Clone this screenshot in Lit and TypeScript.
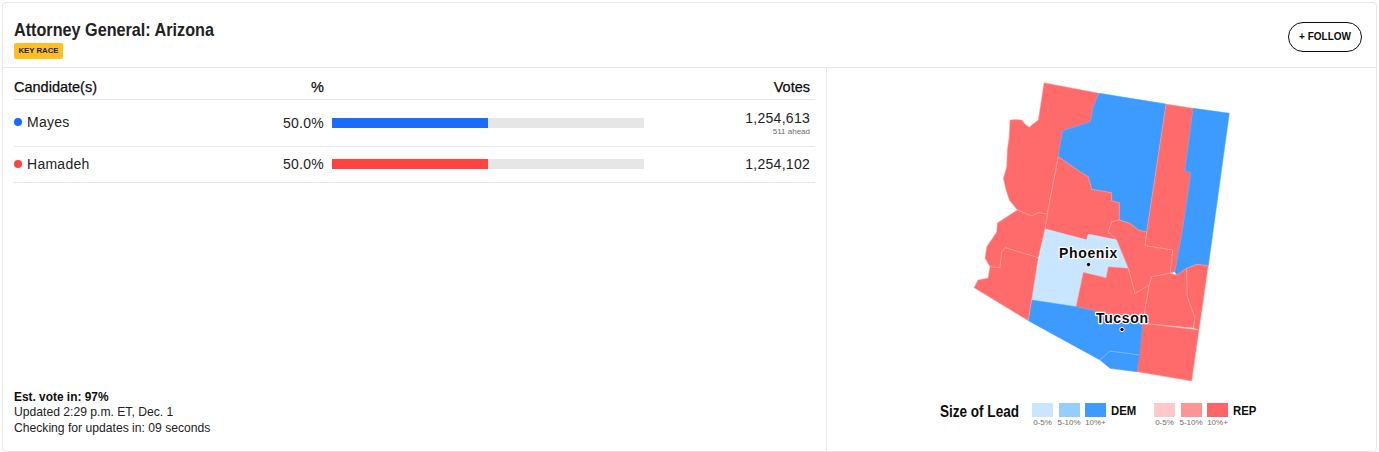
import { LitElement, html, css, svg } from "lit";
import { customElement } from "lit/decorators.js";

const R = "#ff6b6b", B = "#3d9bff", L = "#c8e6ff";
const counties: [string, string][] = [
  [R, "1044,82.7 1099.3,93.3 1093.3,106.7 1090.7,121.7 1062.7,130.7 1058.3,156.7 1047.3,214 1038.3,212.7 1031.7,216 1017.3,210 1009.3,200 1006,190 1003.3,178.3 1006.7,166.7 1007.3,150 1009,138 1010,120 1016,119.5 1021.7,120 1025,124 1029.3,127.3 1033,124 1038.3,120"],
  [B, "1099.3,93.3 1166,104 1146.7,232 1138.3,230 1130,223.3 1119.3,220 1119.3,202.7 1111.7,200.7 1111.7,192.7 1091.7,189.3 1088.3,176.7 1080,171.7 1058.3,156.7 1062.7,130.7 1090.7,121.7 1093.3,106.7"],
  [R, "1166,104 1193.3,108.3 1185,170.7 1191,172.7 1182.7,230 1175,271.7 1170,273.3 1172.7,250 1145,245.7 1146.7,232"],
  [B, "1193.3,108.3 1229.3,113.3 1208.3,265.7 1196.7,264.3 1186.7,268.3 1176.7,275 1175,271.7 1182.7,230 1191,172.7 1185,170.7"],
  [R, "1058.3,156.7 1080,171.7 1088.3,176.7 1091.7,189.3 1111.7,192.7 1111.7,200.7 1119.3,202.7 1119.3,220 1111.7,221.7 1108.3,231.7 1116.7,240 1088.3,234.3 1086.7,240 1045,229 1047.3,214"],
  [L, "1045,229 1086.7,240 1088.3,234.3 1116.7,240 1128.3,268.3 1108.3,266.7 1106,277.7 1083.3,272.3 1076,306.7 1031.7,300"],
  [R, "1083.3,272.3 1106,277.7 1108.3,266.7 1128.3,268.3 1135,293.3 1149.3,285 1142.7,323.3 1097,317 1095,311 1076,306.7"],
  [R, "1111.7,221.7 1119.3,220 1130,223.3 1138.3,230 1146.7,232 1145,245.7 1172.7,250 1170,273.3 1151.7,276.7 1149.3,285 1135,293.3 1128.3,268.3 1116.7,240 1108.3,231.7"],
  [R, "1149.3,285 1151.7,276.7 1170,273.3 1176.7,275 1186.7,268.3 1187.3,296.7 1195,318 1193.3,328 1142.7,323.3"],
  [R, "1186.7,268.3 1196.7,264.3 1208.3,265.7 1199,330 1193.3,328 1195,318 1187.3,296.7"],
  [R, "1142.7,323.3 1199,330 1191.7,381 1136.7,371.7"],
  [B, "1031.7,300 1076,306.7 1095,311 1097,317 1142.7,323.3 1139.3,355 1136.7,371.7 1110,368.3 1100,360 1028.3,320.7"],
  [R, "1017.3,210 1031.7,216 1038.3,212.7 1047.3,214 1045,229 1038.3,257.7 1005,247.7 1001.7,251.7 1000,267.7 990,266.7 985,258.3 986.7,246.7 996.7,232 997.3,223"],
  [R, "1005,247.7 1038.3,257.7 1028.3,320.7 974,287.7 978,280 988,278 990,266.7 1000,267.7 1001.7,251.7"],
];

@customElement("app-root")
export class AppRoot extends LitElement {
  static styles = css`
    :host { display: block; font-family: "Liberation Sans", Arial, sans-serif; color: #222; }
    .page { padding: 2px 2px 0 2px; height: 452px; box-sizing: border-box; }
    .card { border: 1px solid #e6e6e6; border-radius: 4px; height: 450px; box-sizing: border-box; display: flex; flex-direction: column; background: #fff; }
    .head { height: 65px; flex: none; box-sizing: border-box; border-bottom: 1px solid #e6e6e6; padding: 15px 14px 0 11px; display: flex; justify-content: space-between; align-items: flex-start; }
    h1 { margin: 0; font: 700 18.5px/24px "Liberation Sans", sans-serif; color: #222; white-space: nowrap; transform: scaleX(0.875); transform-origin: left center; }
    .badge { display: block; width: 49px; box-sizing: border-box; text-align: center; margin-top: 1px; background: #fdc020; border-radius: 2px; font: 700 7.8px/16px "Liberation Sans", sans-serif; color: #222; }
    .follow { margin-top: 4px; width: 74px; height: 30px; box-sizing: border-box; border: 1px solid #0c0c0c; border-radius: 15px; background: #fff; font: 700 10px/28px "Liberation Sans", sans-serif; color: #0c0c0c; text-align: center; padding: 0; }
    .body { flex: 1; display: flex; min-height: 0; }
    .left { width: 824px; flex: none; box-sizing: border-box; border-right: 1px solid #e6e6e6; padding: 0 11px; display: flex; flex-direction: column; }
    .row { display: grid; grid-template-columns: 252px 50px 312px 1fr; column-gap: 8px; align-items: center; width: 801px; box-sizing: border-box; padding-right: 5px; border-bottom: 1px solid #e6e6e6; font-size: 14px; letter-spacing: 0.27px; }
    .th { height: 32px; font-size: 14.5px; letter-spacing: 0; padding-top: 6px; color: #0c0c0c; -webkit-text-stroke: 0.25px #0c0c0c; }
    .r1 { height: 47px; }
    .r2 { height: 36px; padding-bottom: 2px; }
    .num { text-align: right; }
    .name { display: flex; align-items: center; gap: 5px; }
    .r1 .name { padding-bottom: 3px; }
    .dot { width: 8px; height: 8px; border-radius: 50%; }
    .blue { background: #1a6bff; }
    .red { background: #ff4440; }
    .track { background: #e6e6e6; height: 10px; }
    .fill { height: 100%; }
    .ahead { font-size: 8px; line-height: 10px; color: #6e6e6e; letter-spacing: 0; margin-top: 1px; }
    .votes { line-height: 16px; }
    .foot { margin-top: auto; padding-bottom: 15px; font-size: 12.15px; line-height: 15.5px; }
    .foot b { display: block; color: #0c0c0c; font-size: 11.9px; }
    .right { flex: 1; display: flex; flex-direction: column; }
    svg { display: block; flex: none; }
    .label { font: 700 14px "Liberation Sans", sans-serif; letter-spacing: 0.65px; fill: #0c0c0c; stroke: #fff; stroke-width: 2.5px; paint-order: stroke; stroke-linejoin: round; }
    .legend { display: flex; align-items: flex-start; margin: 15px 0 0 113px; }
    .title { font: 700 16.5px/16px "Liberation Sans", sans-serif; color: #0c0c0c; width: 92px; flex: none; white-space: nowrap; transform: scaleX(0.82); transform-origin: left center; }
    .cell { width: 21px; margin-right: 5.5px; display: flex; flex-direction: column; align-items: center; }
    .sw { width: 21px; height: 14px; }
    .cap { font-size: 8px; line-height: 10px; color: #6e6e6e; white-space: nowrap; margin-top: 1px; }
    .party { font: 700 13.5px/16px "Liberation Sans", sans-serif; color: #0c0c0c; transform: scaleX(0.84); transform-origin: left center; margin-left: -1px; }
    .dem { width: 43.5px; flex: none; }
  `;

  private cell(c: string, t: string) {
    return html`<div class="cell"><div class="sw" style="background:${c}"></div><div class="cap">${t}</div></div>`;
  }

  render() {
    return html`<div class="page"><div class="card">
      <div class="head">
        <div><h1>Attorney General: Arizona</h1><span class="badge">KEY RACE</span></div>
        <button class="follow">+ FOLLOW</button>
      </div>
      <div class="body">
        <div class="left">
          <div class="row th"><div>Candidate(s)</div><div class="num">%</div><div></div><div class="num">Votes</div></div>
          <div class="row r1">
            <div class="name"><span class="dot blue"></span>Mayes</div><div class="num pct">50.0%</div>
            <div class="track"><div class="fill blue" style="width:50%"></div></div>
            <div class="num votes">1,254,613<div class="ahead">511 ahead</div></div>
          </div>
          <div class="row r2">
            <div class="name"><span class="dot red"></span>Hamadeh</div><div class="num pct">50.0%</div>
            <div class="track"><div class="fill red" style="width:50%"></div></div>
            <div class="num votes">1,254,102</div>
          </div>
          <div class="foot"><b>Est. vote in: 97%</b>Updated 2:29 p.m. ET, Dec. 1<br />Checking for updates in: 09 seconds</div>
        </div>
        <div class="right">
          <svg width="549" height="320" viewBox="827 68 549 320">
            ${counties.map(([c, p]) => svg`<polygon points=${p} fill=${c} stroke=${c === R ? "#ffa6a6" : c} stroke-width="0.5" stroke-linejoin="round"></polygon>`)}
            <path d="M1100,360 L1110,351 L1139.3,355" fill="none" stroke="#9fcdff" stroke-width="0.6"></path>
            <circle cx="1088.5" cy="264.5" r="2.2" fill="#000" stroke="#fff" stroke-width="1"></circle>
            <circle cx="1122" cy="329.5" r="2.2" fill="#000" stroke="#fff" stroke-width="1"></circle>
            <text class="label" x="1059" y="258">Phoenix</text>
            <text class="label" x="1096" y="323">Tucson</text>
          </svg>
          <div class="legend">
            <div class="title">Size of Lead</div>
            ${this.cell("#c8e6ff", "0-5%")}${this.cell("#94ceff", "5-10%")}${this.cell("#3d9bff", "10%+")}
            <div class="party dem">DEM</div>
            ${this.cell("#ffc9cc", "0-5%")}${this.cell("#ff9496", "5-10%")}${this.cell("#ff6467", "10%+")}
            <div class="party">REP</div>
          </div>
        </div>
      </div>
    </div></div>`;
  }
}
